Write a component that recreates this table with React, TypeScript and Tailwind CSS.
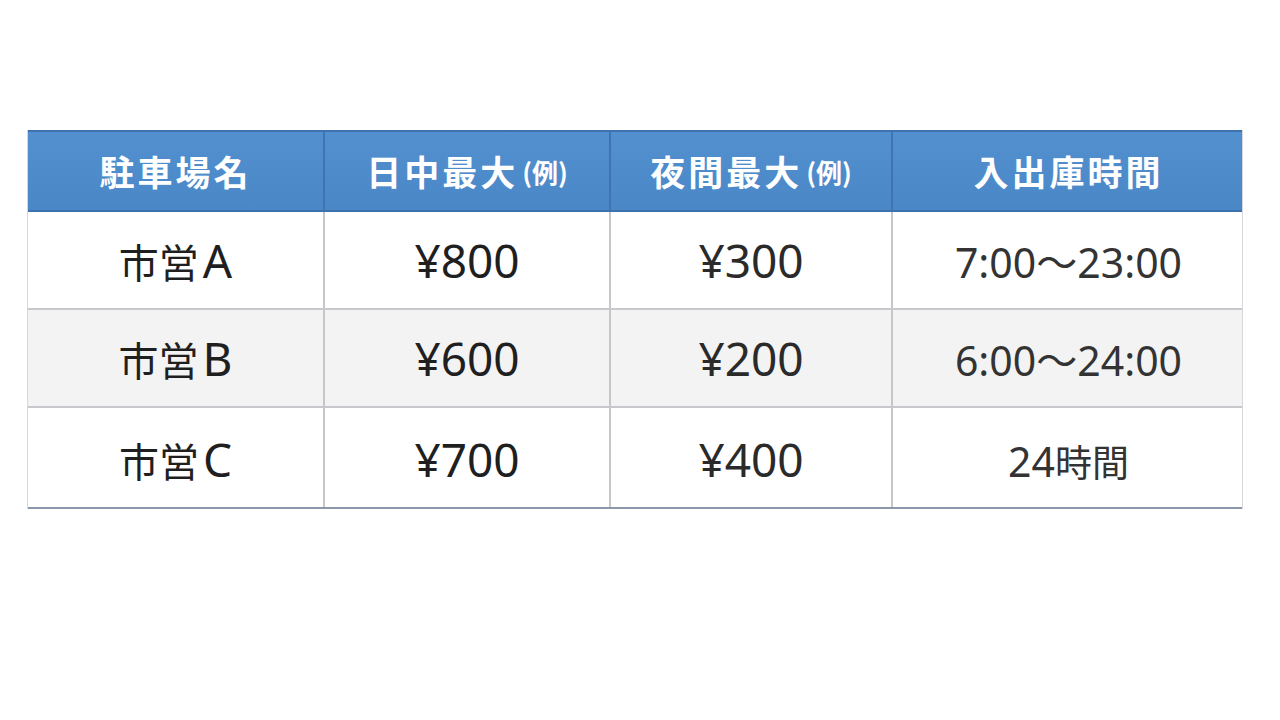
import React from 'react';

const rows = [
  { name: 'A', day: '¥800', night: '¥300', hours: '7:00～23:00' },
  { name: 'B', day: '¥600', night: '¥200', hours: '6:00～24:00' },
  { name: 'C', day: '¥700', night: '¥400', hours: '' },
];

const cols = 'grid grid-cols-[297px_286px_282px_351px]';
const cjk = "font-[family-name:'Noto_Sans_CJK_JP',sans-serif]";
const latin = "font-[family-name:'Noto_Sans','Noto_Sans_CJK_JP',sans-serif]";

const HeadCell = ({ children, last }: { children: React.ReactNode; last?: boolean }) => (
  <div
    className={`flex items-center justify-center font-[family-name:'Noto_Sans_CJK_JP',sans-serif] text-[35px] font-bold tracking-[3px] text-white ${
      last ? '' : 'border-r-2 border-[#3f74b0]'
    }`}
  >
    {children}
  </div>
);

// cells sit text on a shared baseline, ~30px above the row line
const Cell = ({ children, last }: { children: React.ReactNode; last?: boolean }) => (
  <div
    className={`flex items-end justify-center pb-[25px] leading-none text-[#1f1f1f] ${
      last ? '' : 'border-r-2 border-[#c4c6c9]'
    }`}
  >
    <div className="flex items-baseline">{children}</div>
  </div>
);

export default function App() {
  return (
    <div className="h-[720px] w-full bg-white pt-[130px] pl-[27px]">
      <div className="w-[1216px] border-x border-[#d6d8db]">
        {/* header */}
        <div className={`${cols} h-[82px] border-y-2 border-[#3d72ae] bg-gradient-to-b from-[#5290d0] to-[#4a87c7]`}>
          <HeadCell>駐車場名</HeadCell>
          <HeadCell>
            日中最大<span className="ml-1 text-[26px] tracking-normal">(例)</span>
          </HeadCell>
          <HeadCell>
            夜間最大<span className="ml-1 text-[26px] tracking-normal">(例)</span>
          </HeadCell>
          <HeadCell last>入出庫時間</HeadCell>
        </div>

        {/* body */}
        {rows.map((r, i) => (
          <div
            key={r.name}
            className={`${cols} ${i === 2 ? 'h-[101px] border-b-2 border-[#8c98aa]' : 'h-[98px] border-b-2 border-[#c6c8cb]'} ${
              i === 1 ? 'bg-[#f3f3f3]' : 'bg-white'
            }`}
          >
            <Cell>
              <span className={`${cjk} text-[40px]`}>市営</span>
              <span className={`${latin} ml-1 text-[46px]`}>{r.name}</span>
            </Cell>
            <Cell>
              <span className={`${latin} text-[46px]`}>{r.day}</span>
            </Cell>
            <Cell>
              <span className={`${latin} text-[46px] text-[#2a2a2a]`}>{r.night}</span>
            </Cell>
            <Cell last>
              {r.hours ? (
                <span className={`${latin} text-[41px] text-[#333]`}>{r.hours}</span>
              ) : (
                <>
                  <span className={`${latin} text-[41px] text-[#333]`}>24</span>
                  <span className={`${cjk} text-[37px] text-[#333]`}>時間</span>
                </>
              )}
            </Cell>
          </div>
        ))}
      </div>
    </div>
  );
}
